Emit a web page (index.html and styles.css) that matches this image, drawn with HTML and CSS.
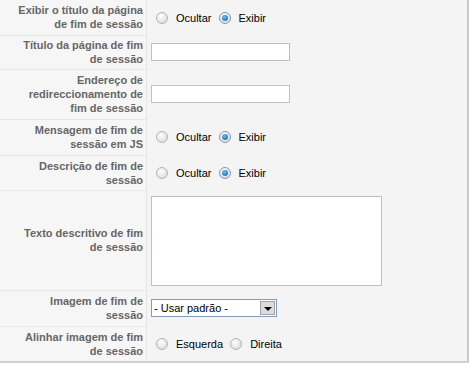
FILE: index.html
```html
<!DOCTYPE html>
<html lang="pt">
<head>
  <meta charset="UTF-8">
  <title>Parâmetros de fim de sessão</title>
  <link rel="stylesheet" href="styles.css">
</head>
<body>
  <table class="paramlist">
    <tr class="h35">
      <td class="key">Exibir o título da página de fim de sessão</td>
      <td class="value">
        <span class="radio"></span><span class="opt">Ocultar</span>
        <span class="radio checked"></span><span class="opt">Exibir</span>
      </td>
    </tr>
    <tr class="h34">
      <td class="key">Título da página de fim de sessão</td>
      <td class="value"><input type="text" class="text"></td>
    </tr>
    <tr class="h50">
      <td class="key">Endereço de redireccionamento de fim de sessão</td>
      <td class="value"><input type="text" class="text"></td>
    </tr>
    <tr class="h36">
      <td class="key">Mensagem de fim de sessão em JS</td>
      <td class="value">
        <span class="radio"></span><span class="opt">Ocultar</span>
        <span class="radio checked"></span><span class="opt">Exibir</span>
      </td>
    </tr>
    <tr class="h35">
      <td class="key">Descrição de fim de sessão</td>
      <td class="value">
        <span class="radio"></span><span class="opt">Ocultar</span>
        <span class="radio checked"></span><span class="opt">Exibir</span>
      </td>
    </tr>
    <tr class="h100">
      <td class="key">Texto descritivo de fim de sessão</td>
      <td class="value"><textarea></textarea></td>
    </tr>
    <tr class="h36">
      <td class="key">Imagem de fim de sessão</td>
      <td class="value">
        <div class="select"><span>- Usar padrão -</span><span class="arrow"></span></div>
      </td>
    </tr>
    <tr class="h36">
      <td class="key">Alinhar imagem de fim de sessão</td>
      <td class="value">
        <span class="radio"></span><span class="opt">Esquerda</span>
        <span class="radio"></span><span class="opt">Direita</span>
      </td>
    </tr>
  </table>
</body>
</html>
```

FILE: styles.css
```css
body {
  margin: 0;
  background: #fff;
  font-family: "Liberation Sans", Arial, sans-serif;
  font-size: 11px;
}
.paramlist {
  width: 469px;
  border-collapse: collapse;
  background: #f4f4f4;
  border-right: 2px solid #c8c8c8;
  border-bottom: 2px solid #d0d0d0;
}
.paramlist td {
  padding: 0;
  vertical-align: middle;
}
.key {
  width: 127px;
  padding: 0 3px 0 16px !important;
  text-align: right;
  font-weight: bold;
  color: #666;
  line-height: 14px;
  background: #f6f6f6;
  border-bottom: 1px solid #e6e6e6;
  border-right: 1px solid #e6e6e6;
}
tr:last-child .key { border-bottom: none; }
.value {
  padding-left: 4px !important;
  color: #000;
  white-space: nowrap;
}
.h34 { height: 34px; }
.h35 { height: 35px; }
.h36 { height: 36px; }
.h50 { height: 50px; }
.h100 { height: 100px; }

/* radios drawn by hand, like the old XP ones */
.radio {
  display: inline-block;
  width: 10px;
  height: 10px;
  border: 1px solid #b4b4b4;
  border-radius: 50%;
  background: radial-gradient(circle at 40% 35%, #fff, #d4d4d4);
  vertical-align: -2px;
  margin: 0 8px 0 4px;
  position: relative;
}
.radio.checked {
  border-color: #7a99b8;
}
.radio.checked::after {
  content: "";
  position: absolute;
  left: 2px;
  top: 2px;
  width: 6px;
  height: 6px;
  border-radius: 50%;
  background: radial-gradient(circle at 40% 35%, #6ac0ee, #105a92);
}
.value .radio:first-child { margin-left: 5px; }

input.text {
  box-sizing: border-box;
  width: 139px;
  height: 18px;
  margin: 0;
  border: 1px solid #c0c0c0;
  background: #fff;
  display: block;
}
textarea {
  box-sizing: border-box;
  display: block;
  width: 231px;
  height: 90px;
  margin: 2px 0 0;
  border: 1px solid #c0c0c0;
  background: #fff;
  resize: none;
}
.select {
  box-sizing: border-box;
  width: 126px;
  height: 18px;
  border: 1px solid #7f9db9;
  background: #fff;
  display: flex;
  align-items: center;
  justify-content: space-between;
  padding-left: 2px;
  font-size: 11px;
}
.arrow {
  width: 15px;
  height: 14px;
  margin-right: 1px;
  background: #dcdcdc;
  border: 1px solid #a0a0a0;
  box-sizing: border-box;
  position: relative;
}
.arrow::after {
  content: "";
  position: absolute;
  left: 3px;
  top: 5px;
  border-left: 4px solid transparent;
  border-right: 4px solid transparent;
  border-top: 4px solid #000;
}
```
